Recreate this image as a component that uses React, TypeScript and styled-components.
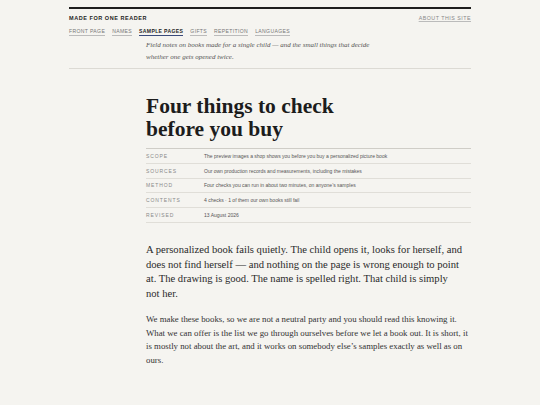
import styled, { createGlobalStyle } from "styled-components";

const GlobalStyle = createGlobalStyle`
  html, body {
    margin: 0;
    padding: 0;
    background: #f5f4f0;
  }
  body {
    font-family: "Liberation Serif", Georgia, serif;
    color: #222;
  }
`;

const navItems = [
  { label: "Front page", active: false },
  { label: "Names", active: false },
  { label: "Sample pages", active: true },
  { label: "Gifts", active: false },
  { label: "Repetition", active: false },
  { label: "Languages", active: false },
];

const meta = [
  ["Scope", "The preview images a shop shows you before you buy a personalized picture book"],
  ["Sources", "Our own production records and measurements, including the mistakes"],
  ["Method", "Four checks you can run in about two minutes, on anyone’s samples"],
  ["Contents", "4 checks · 1 of them our own books still fail"],
  ["Revised", "13 August 2026"],
];

const App = () => {
  return (
    <>
      <GlobalStyle />
      <Page>
        <Masthead>
          <TopRow>
            <SiteName>Made for one reader</SiteName>
            <AboutLink href="#">About this site</AboutLink>
          </TopRow>
          <Nav>
            {navItems.map((item) => (
              <NavLink key={item.label} href="#" $active={item.active}>
                {item.label}
              </NavLink>
            ))}
          </Nav>
          <Column>
            <Tagline>
              Field notes on books made for a single child — and the small things that decide
              whether one gets opened twice.
            </Tagline>
          </Column>
        </Masthead>

        <Column>
          <Title>
            Four things to check
            <br />
            before you buy
          </Title>

          <MetaTable>
            <tbody>
              {meta.map(([label, value]) => (
                <MetaRow key={label}>
                  <MetaLabel>{label}</MetaLabel>
                  <MetaValue>{value}</MetaValue>
                </MetaRow>
              ))}
            </tbody>
          </MetaTable>

          <Lead>
            A personalized book fails quietly. The child opens it, looks for herself, and does not
            find herself — and nothing on the page is wrong enough to point at. The drawing is good.
            The name is spelled right. That child is simply not her.
          </Lead>

          <Body>
            We make these books, so we are not a neutral party and you should read this knowing it.
            What we can offer is the list we go through ourselves before we let a book out. It is
            short, it is mostly not about the art, and it works on somebody else’s samples exactly as
            well as on ours.
          </Body>
        </Column>
      </Page>
    </>
  );
};

export default App;

const Page = styled.div`
  width: 402px;
  margin: 0 auto;
  padding-top: 7px;
`;

const Masthead = styled.header`
  border-top: 2px solid #1e1e1e;
  border-bottom: 1px solid #dcdad4;
  padding-bottom: 5px;
`;

const TopRow = styled.div`
  display: flex;
  justify-content: space-between;
  align-items: center;
  padding-top: 4px;
  height: 9px;
`;

const SiteName = styled.div`
  font-family: "Liberation Sans", Arial, sans-serif;
  font-weight: 700;
  font-size: 5.5px;
  letter-spacing: 0.55px;
  text-transform: uppercase;
  color: #1e1e1e;
`;

const AboutLink = styled.a`
  font-family: "Liberation Sans", Arial, sans-serif;
  font-size: 5.3px;
  letter-spacing: 0.5px;
  text-transform: uppercase;
  color: #888;
  text-decoration: underline;
  text-decoration-color: #bbb;
`;

const Nav = styled.nav`
  display: flex;
  gap: 7px;
  margin-top: 5px;
  height: 10px;
  align-items: center;
`;

const NavLink = styled.a<{ $active: boolean }>`
  font-family: "Liberation Sans", Arial, sans-serif;
  font-size: 5.1px;
  letter-spacing: 0.35px;
  text-transform: uppercase;
  font-weight: ${(p) => (p.$active ? 700 : 400)};
  color: ${(p) => (p.$active ? "#1e1e1e" : "#777")};
  text-decoration: none;
  padding-bottom: 1px;
  border-bottom: ${(p) => (p.$active ? "1px solid #3a4a7a" : "1px solid #bbb")};
`;

const Column = styled.div`
  margin-left: 77px;
`;

const Tagline = styled.p`
  margin: 2px 0 0;
  font-style: italic;
  font-size: 7px;
  line-height: 12px;
  color: #555;
  max-width: 240px;
`;

const Title = styled.h1`
  margin: 26px 0 0;
  font-size: 21.5px;
  line-height: 22.5px;
  font-weight: 700;
  color: #1c1c1c;
`;

const MetaTable = styled.table`
  width: 100%;
  margin-top: 8px;
  border-collapse: collapse;
  border-top: 1px solid #cfcdc7;
  font-family: "Liberation Sans", Arial, sans-serif;
`;

const MetaRow = styled.tr`
  border-bottom: 1px solid #e0ded8;
  height: 14.8px;
`;

const MetaLabel = styled.td`
  width: 58px;
  padding: 0;
  font-size: 5px;
  letter-spacing: 0.9px;
  text-transform: uppercase;
  color: #8a8a8a;
`;

const MetaValue = styled.td`
  padding: 0;
  font-size: 5px;
  color: #555;
`;

const Lead = styled.p`
  margin: 20px 0 0;
  max-width: 318px;
  font-size: 10.6px;
  line-height: 14.7px;
  color: #2a2a2a;
`;

const Body = styled.p`
  margin: 11px 0 0;
  font-size: 8.8px;
  line-height: 13.8px;
  color: #333;
`;
